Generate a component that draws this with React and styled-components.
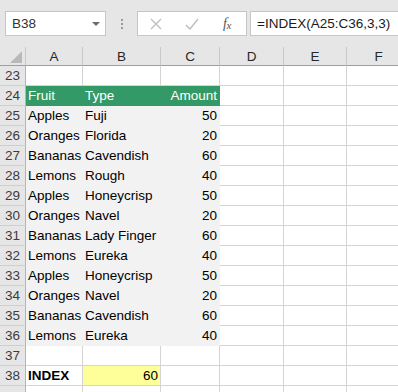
import React from "react";
import styled, { createGlobalStyle, css } from "styled-components";

const GlobalStyle = createGlobalStyle`
  html, body { margin: 0; padding: 0; background: #ffffff; }
  body { font-family: "Liberation Sans", Arial, sans-serif; }
`;

const Page = styled.div`
  width: 398px;
  height: 392px;
  overflow: hidden;
  background: #ffffff;
`;

const TopBar = styled.div`
  display: flex;
  align-items: flex-start;
  box-sizing: border-box;
  height: 47px;
  padding: 11px 0 0 5px;
  background: #e6e6e6;
`;

const NameBox = styled.div`
  box-sizing: border-box;
  width: 101px;
  height: 25px;
  background: #ffffff;
  border: 1px solid #c6c6c6;
  display: flex;
  align-items: center;
  justify-content: space-between;
  padding: 0 5px 0 6px;
  font-size: 13.5px;
  color: #333333;
`;

const Caret = styled.span`
  width: 0;
  height: 0;
  border-left: 4px solid transparent;
  border-right: 4px solid transparent;
  border-top: 4px solid #6d6d6d;
  margin-top: 1px;
`;

const Grip = styled.div`
  width: 31px;
  height: 25px;
  display: flex;
  flex-direction: column;
  align-items: center;
  justify-content: center;
  gap: 2px;
`;

const GripDot = styled.span`
  width: 2px;
  height: 2px;
  background: #9a9a9a;
`;

const ButtonBox = styled.div`
  box-sizing: border-box;
  width: 110px;
  height: 25px;
  background: #ffffff;
  border: 1px solid #c6c6c6;
  display: flex;
  align-items: center;
  margin-right: 3px;
`;

const IconSlot = styled.span`
  width: ${(p) => p.$w}px;
  display: flex;
  align-items: center;
  justify-content: center;
`;

const Fx = styled.span`
  font-family: "Liberation Serif", "Times New Roman", serif;
  font-style: italic;
  color: #555555;
  font-size: 14px;
  letter-spacing: -0.5px;
  & > small {
    font-size: 11px;
    position: relative;
    top: 1px;
  }
`;

const FormulaBox = styled.div`
  box-sizing: border-box;
  flex: 1;
  height: 25px;
  margin-right: -4px;
  background: #ffffff;
  border: 1px solid #c6c6c6;
  display: flex;
  align-items: center;
  padding-left: 6px;
  font-size: 13.5px;
  color: #1a1a1a;
`;

const Sheet = styled.div`
  display: grid;
  grid-template-columns: 26px 57px 78px 59px 64px 63px 64px;
  grid-template-rows: 19px;
  grid-auto-rows: 20px;
`;

const headerBase = css`
  box-sizing: border-box;
  background: #e6e6e6;
  display: flex;
  align-items: center;
  justify-content: center;
  font-size: 13.5px;
`;

const Corner = styled.div`
  ${headerBase};
  border-right: 1px solid #c8c8c8;
  border-bottom: 1px solid #9e9e9e;
  align-items: flex-end;
  justify-content: flex-end;
  padding: 0 3px 2px 0;
`;

const ColHead = styled.div`
  ${headerBase};
  color: #262626;
  border-right: 1px solid #c8c8c8;
  border-bottom: 1px solid #9e9e9e;
`;

const RowHead = styled.div`
  ${headerBase};
  color: #3c3c3c;
  border-right: 1px solid #b4b4b4;
  border-bottom: 1px solid #cfcfcf;
`;

const fills = {
  green: { bg: "#339966", color: "#ffffff", line: "#339966" },
  gray: { bg: "#f2f2f2", color: "#000000", line: "#f2f2f2" },
  yellow: { bg: "#ffff99", color: "#000000", line: "#d4d4d4" },
  none: { bg: "#ffffff", color: "#000000", line: "#d4d4d4" },
};

const Cell = styled.div`
  box-sizing: border-box;
  background: ${(p) => fills[p.$fill].bg};
  color: ${(p) => fills[p.$fill].color};
  border-right: 1px solid ${(p) => fills[p.$fill].line};
  border-bottom: 1px solid ${(p) => fills[p.$fill].line};
  display: flex;
  align-items: center;
  justify-content: ${(p) => (p.$right ? "flex-end" : "flex-start")};
  padding: 0 2px 0 2px;
  font-size: 13.5px;
  font-weight: ${(p) => (p.$bold ? 700 : 400)};
  white-space: nowrap;
`;

const data = [
  ["Apples", "Fuji", 50],
  ["Oranges", "Florida", 20],
  ["Bananas", "Cavendish", 60],
  ["Lemons", "Rough", 40],
  ["Apples", "Honeycrisp", 50],
  ["Oranges", "Navel", 20],
  ["Bananas", "Lady Finger", 60],
  ["Lemons", "Eureka", 40],
  ["Apples", "Honeycrisp", 50],
  ["Oranges", "Navel", 20],
  ["Bananas", "Cavendish", 60],
  ["Lemons", "Eureka", 40],
];

const cols = ["A", "B", "C", "D", "E", "F"];

function Blank({ n }) {
  return Array.from({ length: n }, (_, i) => <Cell key={i} $fill="none" />);
}

export default function App() {
  const rows = [];
  rows.push(
    <React.Fragment key="23">
      <RowHead>23</RowHead>
      <Blank n={6} />
    </React.Fragment>
  );
  rows.push(
    <React.Fragment key="24">
      <RowHead>24</RowHead>
      <Cell $fill="green">Fruit</Cell>
      <Cell $fill="green">Type</Cell>
      <Cell $fill="green" $right>Amount</Cell>
      <Blank n={3} />
    </React.Fragment>
  );
  data.forEach((r, i) => {
    rows.push(
      <React.Fragment key={25 + i}>
        <RowHead>{25 + i}</RowHead>
        <Cell $fill="gray">{r[0]}</Cell>
        <Cell $fill="gray">{r[1]}</Cell>
        <Cell $fill="gray" $right>{r[2]}</Cell>
        <Blank n={3} />
      </React.Fragment>
    );
  });
  rows.push(
    <React.Fragment key="37">
      <RowHead>37</RowHead>
      <Blank n={6} />
    </React.Fragment>
  );
  rows.push(
    <React.Fragment key="38">
      <RowHead>38</RowHead>
      <Cell $fill="none" $bold>INDEX</Cell>
      <Cell $fill="yellow" $right>60</Cell>
      <Blank n={4} />
    </React.Fragment>
  );
  rows.push(
    <React.Fragment key="39">
      <RowHead />
      <Blank n={6} />
    </React.Fragment>
  );

  return (
    <Page>
      <GlobalStyle />
      <TopBar>
        <NameBox>
          <span>B38</span>
          <Caret />
        </NameBox>
        <Grip>
          <GripDot />
          <GripDot />
          <GripDot />
        </Grip>
        <ButtonBox>
          <IconSlot $w={36}>
            <svg width="12" height="12" viewBox="0 0 12 12">
              <path d="M1 1 L11 11 M11 1 L1 11" stroke="#bdbdbd" strokeWidth="1.3" fill="none" />
            </svg>
          </IconSlot>
          <IconSlot $w={36}>
            <svg width="14" height="12" viewBox="0 0 14 12">
              <path d="M1 7 L5 11 L13 1" stroke="#bdbdbd" strokeWidth="1.4" fill="none" />
            </svg>
          </IconSlot>
          <IconSlot $w={34}>
            <Fx>
              f<small>x</small>
            </Fx>
          </IconSlot>
        </ButtonBox>
        <FormulaBox>=INDEX(A25:C36,3,3)</FormulaBox>
      </TopBar>
      <Sheet>
        <Corner>
          <svg width="12" height="12" viewBox="0 0 12 12">
            <path d="M12 0 L12 12 L0 12 Z" fill="#b9b9b9" />
          </svg>
        </Corner>
        {cols.map((c) => (
          <ColHead key={c}>{c}</ColHead>
        ))}
        {rows}
      </Sheet>
    </Page>
  );
}
